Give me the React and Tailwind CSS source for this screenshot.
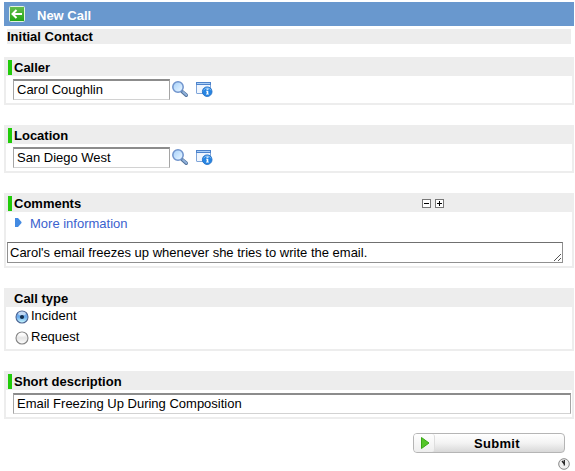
import React from "react";

function Panel({ title, marker = true, height, extra, children }) {
  return (
    <section className={`${height} mb-5 flex flex-col border-x-2 border-b-2 border-[#ededed]`}>
      <div className="flex h-[19px] shrink-0 items-center bg-[#ededed] pl-[2px]">
        <span className={`mt-[2px] h-[15px] w-1 mr-[2px] ${marker ? "bg-[#22cc0a]" : ""}`} />
        <h2 className="w-[408px] pt-[2px] font-bold leading-[19px]">{title}</h2>
        {extra}
      </div>
      {children}
    </section>
  );
}

function SearchIcon() {
  return (
    <svg width="18" height="18" viewBox="0 0 18 18" className="block">
      <path d="M10 10.5 14.2 14.2" stroke="#54749c" strokeWidth="3.6" strokeLinecap="round" />
      <path d="m11 11 3.4 3" stroke="#91b2dc" strokeWidth="1.8" strokeLinecap="round" />
      <circle cx="6" cy="6" r="5.2" fill="url(#lens)" stroke="#6f93cc" strokeWidth="1.5" />
      <defs>
        <linearGradient id="lens" x1="0" y1="0" x2="1" y2="1">
          <stop stopColor="#a5cff8" />
          <stop offset=".6" stopColor="#cfe8ff" />
          <stop offset="1" stopColor="#f4fbff" />
        </linearGradient>
      </defs>
    </svg>
  );
}

function RecordIcon() {
  return (
    <svg width="17" height="17" viewBox="0 0 17 17" className="block">
      <rect x=".5" y="1.5" width="14" height="11" rx=".5" fill="#f0f6fe" stroke="#7fa5d9" />
      <path d="M0 1h15v3H0z" fill="#4d83cc" />
      <path d="M1 2.5h13" stroke="#abcff5" />
      <circle cx="11.2" cy="10.7" r="4.8" fill="#2685e3" stroke="#236fc5" strokeWidth=".9" />
      <path d="M7.7 9.3a3.9 3.9 0 0 1 7.2 0" fill="none" stroke="#83bdf3" />
      <path d="M10.500 7.500h2v1.300h-2zM10 9.700h2.300v3h.6v.8H10v-.8h.7v-2.200H10z" fill="#fff" />
    </svg>
  );
}

function TextField({ value, width }) {
  return (
    <div className={`${width} h-[21px] border border-t-2 border-[#a5a5a5] border-t-[#8c8c8c] border-b-[#d2d2d2] bg-white pl-[3px] leading-[18px]`}>
      {value}
    </div>
  );
}

function Reference({ value }) {
  return (
    <div className="flex pt-[3px] pl-[7px]">
      <TextField value={value} width="w-[157px]" />
      <div className="ml-[2px] mt-[2px]"><SearchIcon /></div>
      <div className="ml-[6px] mt-[2px]"><RecordIcon /></div>
    </div>
  );
}

function Radio({ label, checked }) {
  return (
    <div className="flex h-[21px] items-start pl-[9px]">
      <svg width="14" height="14" viewBox="0 0 14 14" className="mt-[3px] block">
        <defs>
          <linearGradient id={label} x1="0" y1="0" x2="0" y2="1">
            <stop stopColor={checked ? "#79a9e2" : "#fff"} />
            <stop offset=".5" stopColor={checked ? "#6aabed" : "#e5e5e5"} />
            <stop offset="1" stopColor={checked ? "#d0ffff" : "#fff"} />
          </linearGradient>
        </defs>
        <circle cx="7" cy="7" r="6" fill={`url(#${label})`} stroke={checked ? "#4d6695" : "#858585"} strokeWidth="1.1" />
        <ellipse cx="7" cy="3.5" rx="3.8" ry="2" fill="#fff" opacity=".55" />
        {checked && <circle cx="7" cy="7" r="2.1" fill="#122e4d" />}
      </svg>
      <span className="ml-[2px] leading-[17px]">{label}</span>
    </div>
  );
}

function ResizeIcons() {
  return (
    <svg width="22" height="9" viewBox="0 0 22 9" className="mt-[2px] block" shapeRendering="crispEdges">
      <path d="M.5.5h8v8h-8zM13.500.5h8v8h-8z" fill="#fff" stroke="#777" />
      <path d="M2 4.500h5M15 4.500h5M17.500 2v5" stroke="#000" />
    </svg>
  );
}

export default function App() {
  return (
    <main className="h-[471px] w-[575px] overflow-hidden bg-white pl-1 pr-px pt-[2px] font-['Liberation_Sans',Arial,sans-serif] text-[13px] text-black">
      <header className="flex h-6 items-center bg-[#6998ce] pl-[5px]">
        <svg width="16" height="16" viewBox="0 0 16 16" className="block">
          <defs>
            <linearGradient id="back" x1="0" y1="0" x2="0" y2="1">
              <stop stopColor="#65bd4e" />
              <stop offset="1" stopColor="#1fa514" />
            </linearGradient>
          </defs>
          <rect x=".5" y=".5" width="15" height="15" rx="1" fill="url(#back)" stroke="#e4f4df" />
          <path d="M13 8H4M7.500 4 3.500 8l4 4" fill="none" stroke="#fff" strokeWidth="2" />
        </svg>
        <h1 className="ml-3 pt-[3px] font-bold leading-4 text-white">New Call</h1>
      </header>
      <div className="ml-[3px] mr-[3px] mt-[3px] mb-[13px] h-[15px] bg-[#ededed] font-bold leading-[15px]">Initial Contact</div>

      <Panel title="Caller" height="h-12"><Reference value="Carol Coughlin" /></Panel>
      <Panel title="Location" height="h-12"><Reference value="San Diego West" /></Panel>
      <Panel title="Comments" height="h-[75px]" extra={<ResizeIcons />}>
        <div className="flex h-[30px] pl-[9px] text-[#3b62ce]">
          <svg width="7" height="10" viewBox="0 0 7 10" className="mt-[6px] block">
            <path d="M0 0h3l3.500 4v1L3 9H0z" fill="#438ae2" />
          </svg>
          <span className="ml-2 leading-[23px]">More information</span>
        </div>
        <div className="ml-px flex h-[21px] w-[556px] items-end justify-between border border-[#909090] border-t-[#707070] pl-[2px]">
          <span className="leading-[19px]">Carol's email freezes up whenever she tries to write the email.</span>
          <svg width="8" height="8" viewBox="0 0 8 8" className="mb-px mr-px block" shapeRendering="crispEdges">
            <path d="M1 7h1v1H1zM2 6h1v1H2zM3 5h1v1H3zM4 4h1v1H4zM5 3h1v1H5zM6 2h1v1H6zM7 1h1v1H7zM5 7h1v1H5zM6 6h1v1H6zM7 5h1v1H7z" fill="#555" />
          </svg>
        </div>
      </Panel>
      <Panel title="Call type" marker={false} height="h-[63px]">
        <Radio label="Incident" checked />
        <Radio label="Request" />
      </Panel>
      <Panel title="Short description" height="h-12">
        <div className="pl-[7px] pt-[3px]"><TextField value="Email Freezing Up During Composition" width="w-[558px]" /></div>
      </Panel>

      <footer className="-mt-[6px] flex flex-col items-end">
        <button className="mr-[9px] flex h-5 w-[152px] items-center rounded-[4px] border border-[#b5b5b5] bg-gradient-to-b from-white via-[#f3f3f3] to-[#d8d8d8] font-bold">
          <span className="flex h-[18px] w-[21px] items-center justify-center rounded-[3px] border-r border-[#dedede] bg-gradient-to-b from-white to-[#eee]">
            <svg width="9" height="12" viewBox="0 0 9 12" className="ml-[3px] block">
              <path d="M.5.5 8 6 .5 11.500z" fill="#55c52a" stroke="#39a817" />
            </svg>
          </span>
          <span className="flex-1 pr-[5px] pt-px text-center tracking-[.3px]">Submit</span>
        </button>
        <svg width="12" height="12" viewBox="0 0 12 12" className="mr-1 mt-[5px] block">
          <circle cx="6" cy="6" r="5.3" fill="#f0f0f0" stroke="#888" />
          <path d="M4 3 6 5.500M6.300 2v5.500" stroke="#222" strokeWidth="1.3" />
        </svg>
      </footer>
    </main>
  );
}
